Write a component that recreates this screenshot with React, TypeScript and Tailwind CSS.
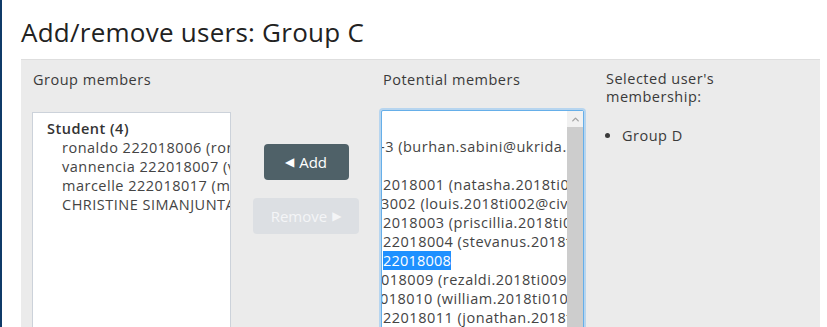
import {ChevronUp} from "lucide-react";

const font = {fontFamily: '"Open Sans", "DejaVu Sans", sans-serif'};

const members = [
    "ronaldo 222018006 (ronaldo.2018ti006@civitas.ukrida.ac.id)",
    "vannencia 222018007 (vannencia.2018ti007@civitas.ukrida.ac.id)",
    "marcelle 222018017 (marcelle.2018ti017@civitas.ukrida.ac.id)",
    "CHRISTINE SIMANJUNTAK 222018020 (christine.2018ti020@civitas.ukrida.ac.id)",
];

// visible (horizontally scrolled) part of each option
const potential: {text: string; shift?: string; selected?: boolean}[] = [
    {text: ""},
    {text: "-3 (burhan.sabini@ukrida.ac.id)", shift: "-ml-[3px]"},
    {text: ""},
    {text: "2018001 (natasha.2018ti001@civitas)"},
    {text: "3002 (louis.2018ti002@civitas.ukrida)", shift: "-ml-[2px]"},
    {text: "2018003 (priscillia.2018ti003@civitas)"},
    {text: "22018004 (stevanus.2018ti004@civitas)"},
    {text: "22018008", selected: true},
    {text: "018009 (rezaldi.2018ti009@civitas)", shift: "-ml-[2px]"},
    {text: "018010 (william.2018ti010@civitas)", shift: "-ml-[3px]"},
    {text: "22018011 (jonathan.2018ti011@civitas)"},
];

export default function App() {
    return (
        <div className="flex h-[327px] w-[827px] overflow-hidden bg-white text-[#373a3c]" style={font}>
            <div className="w-[2px] shrink-0 bg-[#0f3a68]"></div>
            <div className="flex-1 pl-[19px] pr-[7px]">
                <h2 className="pt-[17px] pb-[12px] text-[26px] leading-[30px] font-normal tracking-[0.25px] text-[#222]">
                    Add/remove users: Group C
                </h2>
                <div className="flex h-[400px] border-t border-[#dedede] bg-[#ebebeb] pl-[11px] text-[14.5px] tracking-[0.5px]">
                    <div className="w-[199px] shrink-0">
                        <div className="pt-[10px] pl-[1px] leading-[20px] text-[#3a3a3a]">Group members</div>
                        <div className="mt-[22px] h-[300px] overflow-hidden border border-[#ccd2da] bg-white pl-[14px] pt-[6px]">
                            <div className="font-semibold leading-[19px] text-[#333]">Student (4)</div>
                            {members.map((m) => (
                                <div key={m} className="pl-[15px] leading-[19px] whitespace-nowrap text-[#444]">{m}</div>
                            ))}
                        </div>
                    </div>
                    <div className="flex w-[150px] shrink-0 flex-col items-center pt-[84px] tracking-normal">
                        <button className="flex h-[36px] w-[85px] items-center justify-center rounded-[4px] bg-[#4f6168] text-[15px] text-white">
                            <span className="mr-[5px] text-[12px] leading-none">◀</span>Add
                        </button>
                        <button className="mt-[18px] flex h-[36px] w-[106px] items-center justify-center rounded-[4px] bg-[#dcdfe3] text-[15px] text-[#f4f5f7]">
                            Remove<span className="ml-[5px] text-[12px] leading-none">▶</span>
                        </button>
                    </div>
                    <div className="w-[203px] shrink-0">
                        <div className="pt-[10px] pl-[2px] leading-[20px] text-[#3a3a3a]">Potential members</div>
                        <div className="mt-[20px] h-[300px] rounded-[2px] border border-[#66afe9] bg-white shadow-[0_0_0_2px_#b7d5ef]">
                            <div className="flex h-full">
                                <div className="flex-1 overflow-hidden pt-[7px] pl-[1px]">
                                    {potential.map((p, i) => (
                                        <div key={i} className={`h-[19px] leading-[19px] whitespace-nowrap text-[#444] ${p.shift ?? ""}`}>
                                            {p.selected ? (
                                                <span className="inline-block bg-[#1e90ff] tracking-[0.2px] text-white">{p.text}</span>
                                            ) : (
                                                p.text
                                            )}
                                        </div>
                                    ))}
                                </div>
                                <div className="flex w-[16px] shrink-0 flex-col bg-[#cdcdcd]">
                                    <div className="flex h-[16px] items-center justify-center bg-[#f1f1f1]">
                                        <ChevronUp size={11} strokeWidth={3} className="text-[#a3a3a3]"/>
                                    </div>
                                </div>
                            </div>
                        </div>
                    </div>
                    <div className="pl-[22px] pt-[10px] text-[#3a3a3a]">
                        <div className="leading-[18px]">Selected user's<br/>membership:</div>
                        <ul className="mt-[20px] list-disc pl-[16px] leading-[20px]">
                            <li>Group D</li>
                        </ul>
                    </div>
                </div>
            </div>
        </div>
    );
}
